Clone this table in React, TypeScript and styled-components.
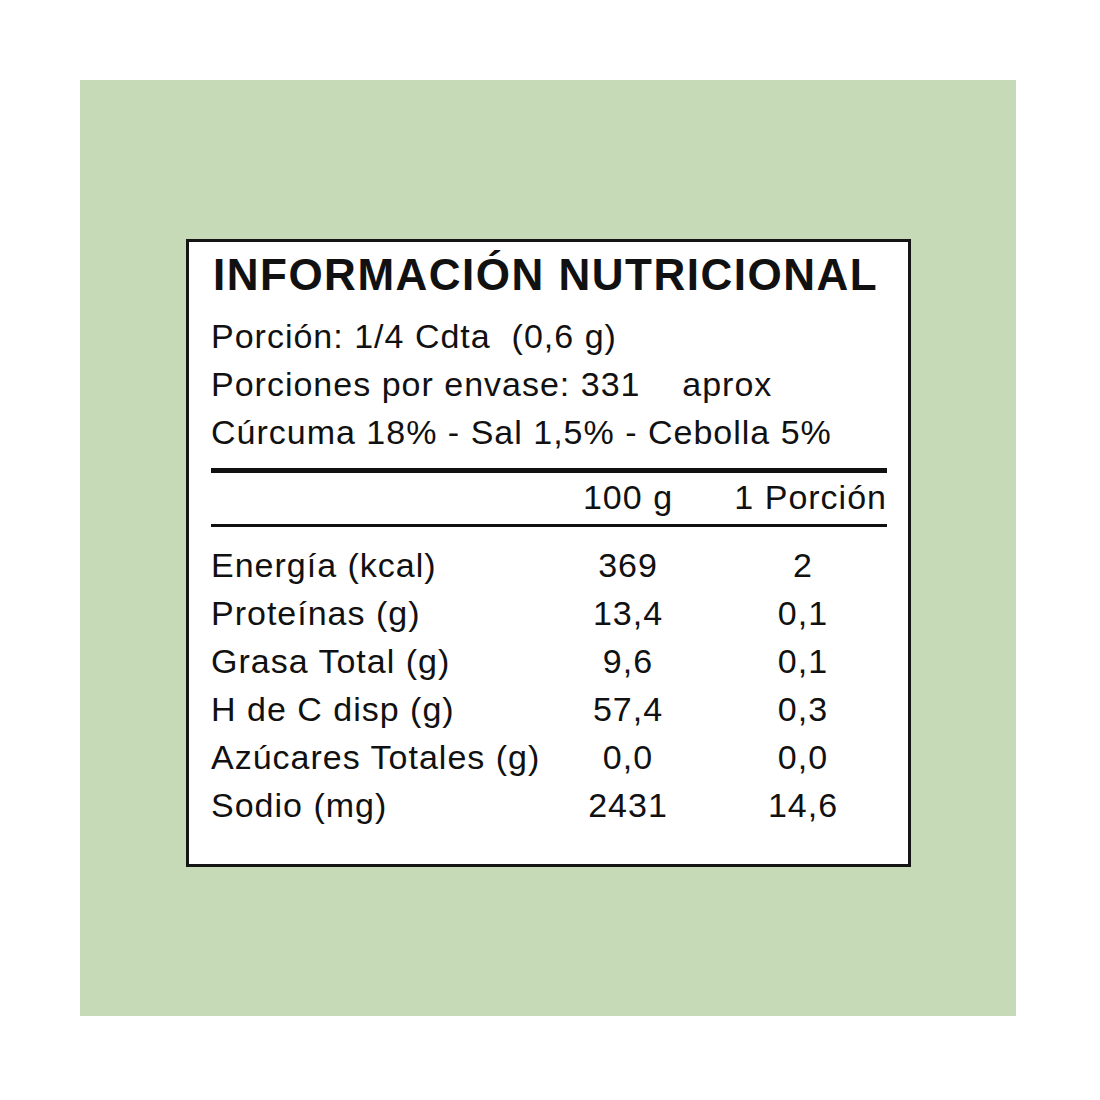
import React from "react";
import styled, { createGlobalStyle } from "styled-components";

const Global = createGlobalStyle`
  html, body { margin: 0; padding: 0; background: #ffffff; }
  body { font-family: "Liberation Sans", Arial, Helvetica, sans-serif; color: #111; }
`;

const Page = styled.div`
  width: 1100px;
  height: 1100px;
  padding: 80px;
  box-sizing: border-box;
`;

const Backdrop = styled.div`
  width: 936px;
  height: 936px;
  background: #c6dab8;
  padding: 159px 0 0 106px;
  box-sizing: border-box;
`;

const Label = styled.section`
  width: 725px;
  height: 628px;
  box-sizing: border-box;
  background: #ffffff;
  border: 3px solid #151515;
  padding: 8px 21px 0 22px;
  display: flex;
  flex-direction: column;
`;

const Title = styled.h1`
  margin: 0 0 0 2px;
  font-size: 44px;
  line-height: 50px;
  font-weight: 700;
  letter-spacing: 1.5px;
  color: #111;
`;

const Info = styled.div`
  margin-top: 12px;
  display: flex;
  flex-direction: column;
`;

const InfoLine = styled.div`
  font-size: 34px;
  line-height: 48px;
  letter-spacing: 1px;
  white-space: pre;
`;

const Rule = styled.div<{ $thick?: boolean; $gap: number }>`
  height: ${(p) => (p.$thick ? 5 : 3)}px;
  background: #111;
  margin-top: ${(p) => p.$gap}px;
`;

const Grid = styled.div`
  display: grid;
  grid-template-columns: 357px 120px 1fr;
  font-size: 34px;
  line-height: 48px;
  letter-spacing: 1px;
`;

const Cell = styled.div<{ $align?: "left" | "center" | "right"; $inset?: number }>`
  text-align: ${(p) => p.$align ?? "left"};
  white-space: pre;
  padding-left: ${(p) => p.$inset ?? 0}px;
`;

const Rows = styled.div`
  margin-top: 14px;
`;

const rows: [string, string, string][] = [
  ["Energía (kcal)", "369", "2"],
  ["Proteínas (g)", "13,4", "0,1"],
  ["Grasa Total (g)", "9,6", "0,1"],
  ["H de C disp (g)", "57,4", "0,3"],
  ["Azúcares Totales (g)", "0,0", "0,0"],
  ["Sodio (mg)", "2431", "14,6"],
];

export default function App() {
  return (
    <>
      <Global />
      <Page>
        <Backdrop>
          <Label>
            <Title>INFORMACIÓN NUTRICIONAL</Title>
            <Info>
              <InfoLine>Porción: 1/4 Cdta  (0,6 g)</InfoLine>
              <InfoLine>Porciones por envase: 331    aprox</InfoLine>
              <InfoLine>Cúrcuma 18% - Sal 1,5% - Cebolla 5%</InfoLine>
            </Info>
            <Rule $thick $gap={12} />
            <Grid>
              <Cell />
              <Cell $align="center">100 g</Cell>
              <Cell $align="right">1 Porción</Cell>
            </Grid>
            <Rule $gap={3} />
            <Rows>
              {rows.map(([name, a, b]) => (
                <Grid key={name}>
                  <Cell>{name}</Cell>
                  <Cell $align="center">{a}</Cell>
                  <Cell $align="center" $inset={31}>{b}</Cell>
                </Grid>
              ))}
            </Rows>
          </Label>
        </Backdrop>
      </Page>
    </>
  );
}
